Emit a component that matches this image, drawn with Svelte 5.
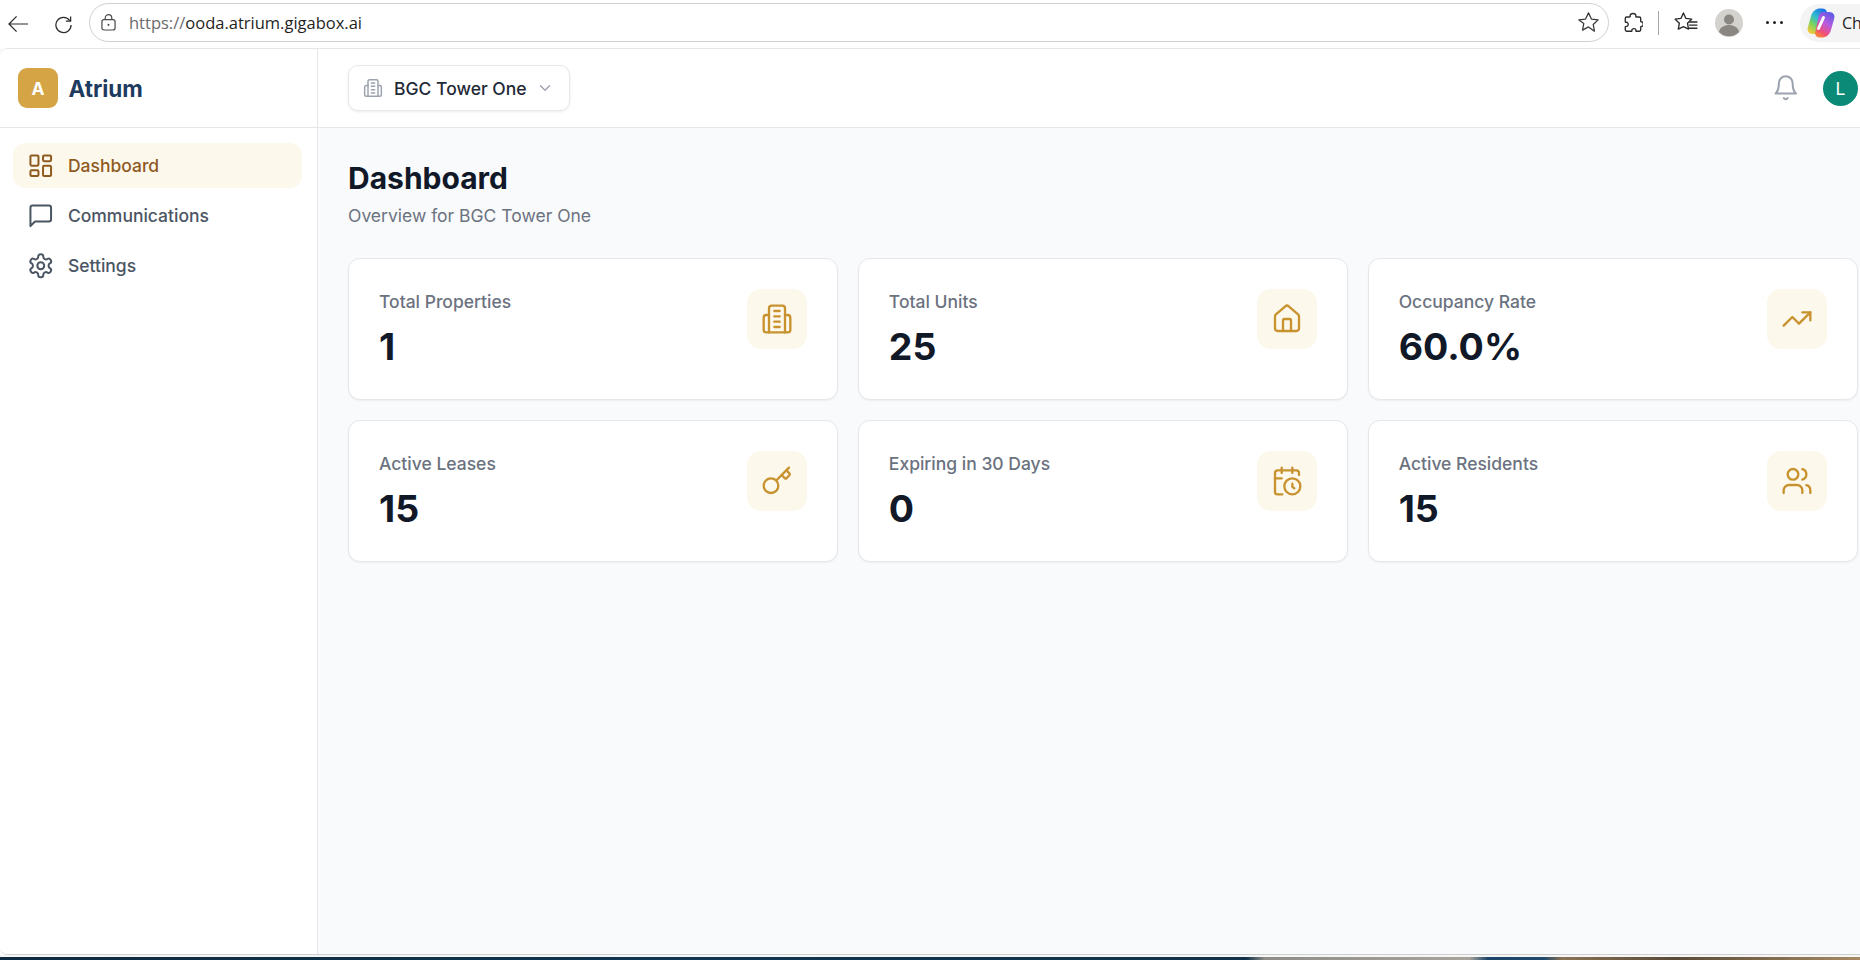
<script>
  const nav = [
    { label: 'Dashboard', icon: 'dash', active: true },
    { label: 'Communications', icon: 'msg' },
    { label: 'Settings', icon: 'gear' }
  ];
  const cards = [
    { label: 'Total Properties', value: '1', icon: 'building' },
    { label: 'Total Units', value: '25', icon: 'house' },
    { label: 'Occupancy Rate', value: '60.0%', icon: 'trend' },
    { label: 'Active Leases', value: '15', icon: 'key' },
    { label: 'Expiring in 30 Days', value: '0', icon: 'calendar' },
    { label: 'Active Residents', value: '15', icon: 'users' }
  ];
</script>

{#snippet glyph(name)}
  <svg class="ico" viewBox="0 0 24 24" fill="none" stroke="currentColor" stroke-linecap="round" stroke-linejoin="round">
    {#if name === 'dash'}
      <rect x="3" y="3" width="7" height="9" rx="1"/><rect x="14" y="3" width="7" height="5" rx="1"/><rect x="14" y="12" width="7" height="9" rx="1"/><rect x="3" y="16" width="7" height="5" rx="1"/>
    {:else if name === 'msg'}
      <path d="M21 15a2 2 0 0 1-2 2H7l-4 4V5a2 2 0 0 1 2-2h14a2 2 0 0 1 2 2z"/>
    {:else if name === 'gear'}
      <path d="M12.22 2h-.44a2 2 0 0 0-2 2v.18a2 2 0 0 1-1 1.73l-.43.25a2 2 0 0 1-2 0l-.15-.08a2 2 0 0 0-2.73.73l-.22.38a2 2 0 0 0 .73 2.73l.15.1a2 2 0 0 1 1 1.72v.51a2 2 0 0 1-1 1.74l-.15.09a2 2 0 0 0-.73 2.73l.22.38a2 2 0 0 0 2.73.73l.15-.08a2 2 0 0 1 2 0l.43.25a2 2 0 0 1 1 1.73V20a2 2 0 0 0 2 2h.44a2 2 0 0 0 2-2v-.18a2 2 0 0 1 1-1.73l.43-.25a2 2 0 0 1 2 0l.15.08a2 2 0 0 0 2.73-.73l.22-.39a2 2 0 0 0-.73-2.73l-.15-.08a2 2 0 0 1-1-1.74v-.5a2 2 0 0 1 1-1.74l.15-.09a2 2 0 0 0 .73-2.73l-.22-.38a2 2 0 0 0-2.73-.73l-.15.08a2 2 0 0 1-2 0l-.43-.25a2 2 0 0 1-1-1.73V4a2 2 0 0 0-2-2z"/><circle cx="12" cy="12" r="3"/>
    {:else if name === 'building'}
      <path d="M6 22V4a2 2 0 0 1 2-2h8a2 2 0 0 1 2 2v18Z"/><path d="M6 9H4a2 2 0 0 0-2 2v9a2 2 0 0 0 2 2h2"/><path d="M18 9h2a2 2 0 0 1 2 2v9a2 2 0 0 1-2 2h-2"/><path d="M10 6h4"/><path d="M10 10h4"/><path d="M10 14h4"/><path d="M10 18h4"/>
    {:else if name === 'house'}
      <path d="M15 21v-8a1 1 0 0 0-1-1h-4a1 1 0 0 0-1 1v8"/><path d="M3 10a2 2 0 0 1 .709-1.528l7-5.999a2 2 0 0 1 2.582 0l7 5.999A2 2 0 0 1 21 10v9a2 2 0 0 1-2 2H5a2 2 0 0 1-2-2z"/>
    {:else if name === 'trend'}
      <polyline points="22 7 13.5 15.5 8.5 10.5 2 17"/><polyline points="16 7 22 7 22 13"/>
    {:else if name === 'key'}
      <path d="m15.5 7.5 2.3 2.3a1 1 0 0 0 1.4 0l2.1-2.1a1 1 0 0 0 0-1.4L19 4"/><path d="m21 2-9.6 9.6"/><circle cx="7.5" cy="15.5" r="5.5"/>
    {:else if name === 'calendar'}
      <path d="M21 7.5V6a2 2 0 0 0-2-2H5a2 2 0 0 0-2 2v14a2 2 0 0 0 2 2h3.5"/><path d="M16 2v4"/><path d="M8 2v4"/><path d="M3 10h5"/><path d="M17.5 17.5 16 16.3V14"/><circle cx="16" cy="16" r="6"/>
    {:else if name === 'users'}
      <path d="M16 21v-2a4 4 0 0 0-4-4H6a4 4 0 0 0-4 4v2"/><circle cx="9" cy="7" r="4"/><path d="M22 21v-2a4 4 0 0 0-3-3.87"/><path d="M16 3.13a4 4 0 0 1 0 7.75"/>
    {:else if name === 'bell'}
      <path d="M6 8a6 6 0 0 1 12 0c0 7 3 9 3 9H3s3-2 3-9"/><path d="M10.3 21a1.94 1.94 0 0 0 3.4 0"/>
    {:else if name === 'chev'}
      <path d="m6 9 6 6 6-6"/>
    {/if}
  </svg>
{/snippet}

<div class="app">
  <div class="chrome">
    <svg class="back" viewBox="0 0 22 18" fill="none" stroke="#2b2b2b" stroke-width="1.3"><path d="M1 9h20M9 1 1 9l8 8"/></svg>
    <svg class="reload" viewBox="0 0 20 20" fill="none" stroke="#2b2b2b" stroke-width="1.3"><path d="M16.6 6A8 8 0 1 0 18 10.5"/><path d="M17.5 1.5V6.500H12.500"/></svg>
    <div class="omni">
      <svg class="lock" viewBox="0 0 16 18" fill="none" stroke="#4a4a4a" stroke-width="1.3"><rect x="1" y="6" width="14" height="11" rx="2.200"/><path d="M4.500 6V4.200a3.500 3.500 0 0 1 7 0V6"/><circle cx="8" cy="11.500" r="1.100" fill="#4a4a4a" stroke="none"/></svg>
      <span class="url"><span class="scheme">https://</span>ooda.atrium.gigabox.ai</span>
      <svg class="star" viewBox="0 0 22 22" fill="none" stroke="#3a3a3a" stroke-width="1.200" stroke-linejoin="round"><path d="M11 1.800l2.800 5.900 6.400.8-4.700 4.400 1.200 6.400L11 15.200l-5.700 3.100 1.200-6.400L1.800 8.500l6.400-.8z"/></svg>
    </div>
    <svg class="puzzle" viewBox="0 0 22 24" fill="none" stroke="#2b2b2b" stroke-width="1.500" stroke-linejoin="round"><path d="M8 4.500C7 1.500 15 1 14 5c0 .8.3 1 1 1h3c1 0 1.500.5 1.500 1.500v3c0 .7.4 1 1 .8 2.300 0 2.300 5 0 5-.6-.2-1 .1-1 .8v3c0 1-.5 1.500-1.500 1.500h-3c-.7 0-1-.4-.8-1 .3-2.500-4.700-2.500-4.400 0 .2.6-.1 1-.8 1H4c-1 0-1.500-.5-1.500-1.500v-3c0-.7.4-1 1-.8 3 .5 3-5 0-4.500-.6.2-1-.1-1-.8V7.500C2.500 6.500 3 6 4 6h3c.7 0 1.200-.6 1-1.500z"/></svg>
    <span class="divider"></span>
    <svg class="favs" viewBox="0 0 24 22" fill="none" stroke="#2b2b2b" stroke-width="1.300" stroke-linejoin="round"><path d="M10 1.800l2.400 5.300 5.500.7-4 3.900 1 5.700L10 14.900l-4.900 2.500 1-5.700-4-3.900 5.500-.7z"/><path d="M16 10.500h7M16 13.500h7M15.500 16.500h7.500" stroke-linecap="round"/></svg>
    <div class="profile">
      <svg viewBox="0 0 28 28"><circle cx="14" cy="14" r="14" fill="#d3d2ce"/><circle cx="14" cy="10.500" r="5" fill="#8a8782"/><path d="M4 23c1-5 5.500-7 10-7s9 2 10 7a14 14 0 0 1-20 0z" fill="#8a8782"/></svg>
    </div>
    <div class="dots"><i></i><i></i><i></i></div>
    <div class="copilot">
      <svg viewBox="0 0 28 30">
        <defs>
          <linearGradient id="cpa" x1="0.800" y1="0" x2="0.200" y2="1"><stop offset="0" stop-color="#1a6fe8"/><stop offset="0.400" stop-color="#2fbcd0"/><stop offset="0.700" stop-color="#7fd35a"/><stop offset="1" stop-color="#f8c838"/></linearGradient>
          <linearGradient id="cpb" x1="0.800" y1="0" x2="0.300" y2="1"><stop offset="0" stop-color="#5a5ae6"/><stop offset="0.450" stop-color="#b85be0"/><stop offset="0.800" stop-color="#f0507a"/><stop offset="1" stop-color="#f7813b"/></linearGradient>
        </defs>
        <path d="M15 0.500c3 0 4.500 1.500 5 4L16 23c-.6 2-2 3-4 3H6C2 26 0 23 .7 20L4 8C5.500 3 9 .5 13 .5z" fill="url(#cpa)"/>
        <path d="M13 29.500c-3 0-4.500-1.500-5-4L12 7c.6-2 2-3 4-3h6c4 0 6 3 5.300 6L24 22c-1.500 5-5 7.500-9 7.500z" fill="url(#cpb)"/>
        <path d="M16.500 9.500 11.500 20.500" stroke="#fff" stroke-width="3" stroke-linecap="round"/>
      </svg>
      <span>Ch</span>
    </div>
  </div>

  <div class="page">
    <aside class="sidebar">
      <div class="brand">
        <div class="logo">A</div>
        <span class="brand-name">Atrium</span>
      </div>
      <nav>
        {#each nav as item}
          <div class="nav-item" class:active={item.active}>
            {@render glyph(item.icon)}
            <span>{item.label}</span>
          </div>
        {/each}
      </nav>
    </aside>
    <div class="content">
      <header>
        <div class="selector">
          <span class="sel-icon">{@render glyph('building')}</span>
          <span class="sel-text">BGC Tower One</span>
          <span class="sel-chev">{@render glyph('chev')}</span>
        </div>
        <div class="head-right">
          <span class="bell">{@render glyph('bell')}</span>
          <div class="avatar">L</div>
        </div>
      </header>
      <main>
        <h1>Dashboard</h1>
        <p class="sub">Overview for BGC Tower One</p>
        <div class="grid">
          {#each cards as c}
            <div class="card">
              <div class="card-text">
                <div class="label">{c.label}</div>
                <div class="value">{c.value}</div>
              </div>
              <div class="icon-box">{@render glyph(c.icon)}</div>
            </div>
          {/each}
        </div>
      </main>
    </div>
  </div>
  <div class="gap"></div>
  <div class="wallpaper"></div>
</div>

<style>
  :global(body) { margin: 0; background: #fff; }
  .app {
    width: 1860px;
    height: 960px;
    display: flex;
    flex-direction: column;
    overflow: hidden;
    font-family: Inter, "Liberation Sans", sans-serif;
    background: #fbfbfb;
  }
  .ico { width: 27.5px; height: 27.5px; stroke-width: 1.750; display: block; flex: none; }

  .chrome {
    height: 48px;
    flex: none;
    display: flex;
    align-items: center;
    background: #fff;
  }
  .back { width: 21px; height: 18px; margin-left: 8px; flex: none; }
  .reload { width: 19px; height: 19px; margin-left: 25px; flex: none; }
  .omni {
    margin-left: 16px;
    width: 1520px;
    height: 39px;
    box-sizing: border-box;
    flex: none;
    border: 1.5px solid #d0d0d0;
    border-radius: 20px;
    display: flex;
    align-items: center;
    background: #fff;
    margin-top: -3px;
  }
  .lock { width: 15px; height: 17px; margin-left: 11px; flex: none; }
  .url {
    margin-left: 13px;
    flex: 1;
    font: 400 16.500px "Open Sans", "Noto Sans", sans-serif;
    color: #1f1f1f;
  }
  .scheme { color: #6b6b6b; }
  .star { width: 23px; height: 23px; margin-right: 8px; flex: none; }
  .puzzle { width: 20px; height: 23px; margin-left: 14px; flex: none; margin-top: -3px; }
  .divider { width: 1px; height: 24px; background: #a8a8a8; margin-left: 15px; flex: none; margin-top: -3px; }
  .favs { width: 25px; height: 23px; margin-left: 14px; flex: none; margin-top: -3px; }
  .profile { width: 28px; height: 28px; margin-left: 17px; flex: none; margin-top: -3px; }
  .profile svg { width: 28px; height: 28px; display: block; }
  .dots { display: flex; gap: 4px; margin-left: 23px; flex: none; margin-top: -3px; }
  .dots i { width: 3px; height: 3px; border-radius: 50%; background: #222; display: block; }
  .copilot {
    margin-left: 17px;
    flex: 1;
    height: 38px;
    margin-top: -3px;
    background: #f4f4f4;
    border-radius: 19px 0 0 19px;
    display: flex;
    align-items: center;
    padding-left: 7px;
    font: 400 16px "Open Sans", sans-serif;
    color: #222;
  }
  .copilot svg { width: 28px; height: 30px; flex: none; }
  .copilot span { margin-left: 7px; }

  .page {
    flex: 1;
    min-height: 0;
    display: flex;
    border-top: 1px solid #e6e6e6;
    border-bottom: 1px solid #cfcfcf;
    border-radius: 8px 0 0 8px;
    overflow: hidden;
    background: #fff;
  }
  .sidebar {
    width: 318px;
    flex: none;
    box-sizing: border-box;
    background: #fff;
    border-right: 1px solid #e5e7eb;
  }
  .brand {
    height: 78px;
    box-sizing: content-box;
    border-bottom: 1px solid #e5e7eb;
    display: flex;
    align-items: center;
    padding-left: 18px;
    gap: 10.500px;
  }
  .logo {
    width: 40px;
    height: 40px;
    border-radius: 9px;
    background: #d4a445;
    color: #fff;
    font-weight: 700;
    font-size: 17.500px;
    display: flex;
    align-items: center;
    justify-content: center;
  }
  .brand-name { font-size: 22.500px; font-weight: 700; color: #1e3a5f; }
  nav {
    padding: 15px 15px 0 13px;
    display: flex;
    flex-direction: column;
    gap: 5px;
  }
  .nav-item {
    height: 45px;
    border-radius: 12px;
    display: flex;
    align-items: center;
    gap: 13.800px;
    padding-left: 13.600px;
    font-size: 17.500px;
    font-weight: 500;
    color: #4b5563;
  }
  .nav-item.active { background: #fdf8ec; color: #8f5a1f; }
  .content { flex: 1; min-width: 0; background: #f9fafb; display: flex; flex-direction: column; }
  header {
    height: 78px;
    box-sizing: content-box;
    flex: none;
    background: #fff;
    border-bottom: 1px solid #e5e7eb;
    display: flex;
    align-items: center;
    justify-content: space-between;
    padding-left: 30px;
    padding-right: 2px;
  }
  .selector {
    width: 222px;
    height: 46px;
    box-sizing: border-box;
    border: 1px solid #e5e7eb;
    border-radius: 10px;
    background: #fff;
    box-shadow: 0 1px 3px rgba(0,0,0,.08);
    display: flex;
    align-items: center;
    padding-left: 14px;
  }
  .sel-icon { color: #9ca3af; }
  .sel-icon :global(.ico) { width: 20px; height: 20px; stroke-width: 1.800; }
  .sel-text { font-size: 17.500px; font-weight: 500; color: #1f2937; margin-left: 11px; white-space: nowrap; }
  .sel-chev { color: #9ca3af; margin-left: 9.500px; }
  .sel-chev :global(.ico) { width: 18px; height: 18px; stroke-width: 1.800; }
  .head-right { display: flex; align-items: center; gap: 24px; }
  .bell { color: #9ca3af; }
  .avatar {
    width: 35px;
    height: 35px;
    border-radius: 50%;
    background: #0b8a78;
    color: #fff;
    font-size: 17.500px;
    font-weight: 400;
    display: flex;
    align-items: center;
    justify-content: center;
  }
  main { flex: 1; padding: 31px 2.500px 0 30px; min-height: 0; }
  h1 {
    margin: 0 0 7px;
    font-size: 30px;
    line-height: 38px;
    font-weight: 700;
    color: #111827;
  }
  .sub { margin: 0 0 30px; font-size: 17.500px; line-height: 24px; color: #6b7280; }
  .grid {
    display: grid;
    grid-template-columns: repeat(3, 1fr);
    column-gap: 20px;
    row-gap: 20px;
  }
  .card {
    height: 142px;
    box-sizing: border-box;
    background: #fff;
    border: 1px solid #e5e7eb;
    border-radius: 12px;
    box-shadow: 0 1px 2px rgba(0,0,0,.05);
    padding: 30px 29.500px 30px 30px;
    display: flex;
    justify-content: space-between;
    align-items: flex-start;
  }
  .card-text { padding-top: 1px; }
  .label { font-size: 17.500px; line-height: 24px; font-weight: 500; color: #6b7280; }
  .value { margin-top: 10px; font-size: 37.500px; line-height: 45px; font-weight: 700; color: #111827; }
  .icon-box {
    width: 60px;
    height: 60px;
    border-radius: 14px;
    background: #fdf8ec;
    color: #c8922f;
    display: flex;
    align-items: center;
    justify-content: center;
  }
  .icon-box :global(.ico) { width: 32px; height: 32px; stroke-width: 1.750; }
  .gap { height: 2px; flex: none; background: #f6f6f6; }
  .wallpaper {
    height: 3px;
    flex: none;
    background: linear-gradient(90deg, #0e2a3f 0%, #103550 35%, #12324a 67%, #8f8d88 68%, #a8a49c 79%, #1d4468 80%, #234a6c 83%, #8a7255 84%, #5a4a38 90%, #a68a63 100%);
  }
</style>
